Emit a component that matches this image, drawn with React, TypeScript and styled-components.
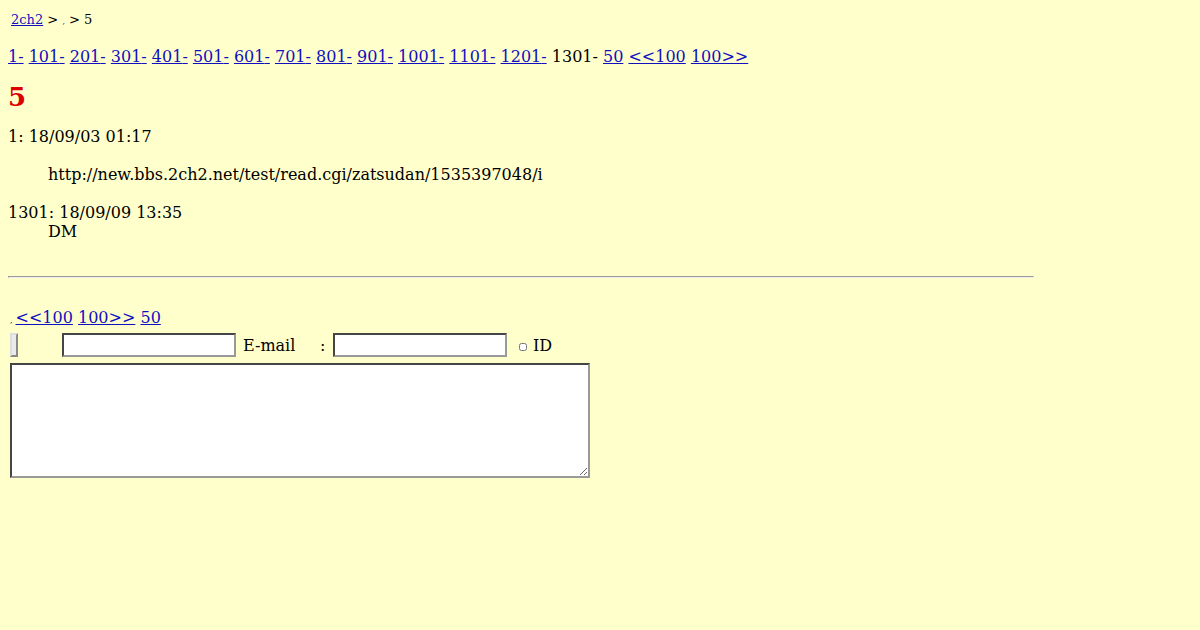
import React from "react";
import styled, { createGlobalStyle } from "styled-components";

const GlobalStyle = createGlobalStyle`
  body {
    margin: 8px;
    background: #ffffcc;
    color: #000;
    font-family: "DejaVu Serif", serif;
    font-size: 16px;
  }
  a { color: #1010c0; }
`;

const Breadcrumb = styled.div`
  font-size: 13px;
  padding: 4px 3px 0;
`;

const PageNav = styled.p`
  margin: 20px 0 0;
`;

const Title = styled.h1`
  color: #dd0000;
  font-size: 26px;
  margin: 16px 0 0;
`;

const Posts = styled.dl`
  margin: 15px 0 0;
`;

const PostHead = styled.dt`
  margin: 0;
`;

const PostBody = styled.dd<{ $gap?: boolean }>`
  margin: ${(p) => (p.$gap ? "19px 0 19px 40px" : "0 0 0 40px")};
`;

const Rule = styled.hr`
  width: 1024px;
  margin: 35px 0 0;
  border-style: inset;
  border-width: 1px;
  color: gray;
`;

const FootNav = styled.div`
  margin-top: 30px;
  padding-left: 2px;
`;

const Dot = styled.span<{ $pad?: number }>`
  font-size: 8px;
  padding-right: ${(p) => p.$pad ?? 0}px;
`;

const FormRow = styled.form`
  display: flex;
  flex-direction: column;
  gap: 6px;
  margin-top: 6px;
  padding-left: 2px;
`;

const InputLine = styled.div`
  display: flex;
  align-items: center;
`;

const SubmitButton = styled.button`
  width: 8px;
  height: 24px;
  padding: 0;
  margin-right: 44px;
  background: #eaeaea;
  border: 2px outset #ddd;
`;

const TextField = styled.input`
  width: 168px;
  height: 18px;
  padding: 1px;
  border: 2px inset #999;
  background: #fff;
`;

const Label = styled.span<{ $w: number }>`
  width: ${(p) => p.$w}px;
  padding-left: 7px;
  box-sizing: border-box;
`;

const Check = styled.input`
  width: 8px;
  height: 8px;
  margin: 4px 6px 0 12px;
`;

const Body = styled.textarea`
  width: 574px;
  height: 109px;
  border: 2px inset #999;
  background: #fff;
  padding: 1px;
`;

const pages = ["1", "101", "201", "301", "401", "501", "601", "701", "801", "901", "1001", "1101", "1201"];

export default function App() {
  return (
    <>
      <GlobalStyle />
      <Breadcrumb>
        <a href="#">2ch2</a> &gt; <Dot>,</Dot> &gt; 5
      </Breadcrumb>
      <PageNav>
        {pages.map((n) => (
          <React.Fragment key={n}>
            <a href="#">{n}-</a>{" "}
          </React.Fragment>
        ))}
        1301- <a href="#">50</a> <a href="#">&lt;&lt;100</a> <a href="#">100&gt;&gt;</a>
      </PageNav>
      <Title>5</Title>
      <Posts>
        <PostHead>1: 18/09/03 01:17</PostHead>
        <PostBody $gap>http://new.bbs.2ch2.net/test/read.cgi/zatsudan/1535397048/i</PostBody>
        <PostHead>1301: 18/09/09 13:35</PostHead>
        <PostBody>DM</PostBody>
      </Posts>
      <Rule />
      <FootNav>
        <Dot $pad={3}>,</Dot>
        <a href="#">&lt;&lt;100</a> <a href="#">100&gt;&gt;</a> <a href="#">50</a>
      </FootNav>
      <FormRow>
        <InputLine>
          <SubmitButton type="button" />
          <TextField />
          <Label $w={77}>E-mail</Label>
          <Label $w={20}>:</Label>
          <TextField />
          <Check type="checkbox" />
          ID
        </InputLine>
        <Body />
      </FormRow>
    </>
  );
}
